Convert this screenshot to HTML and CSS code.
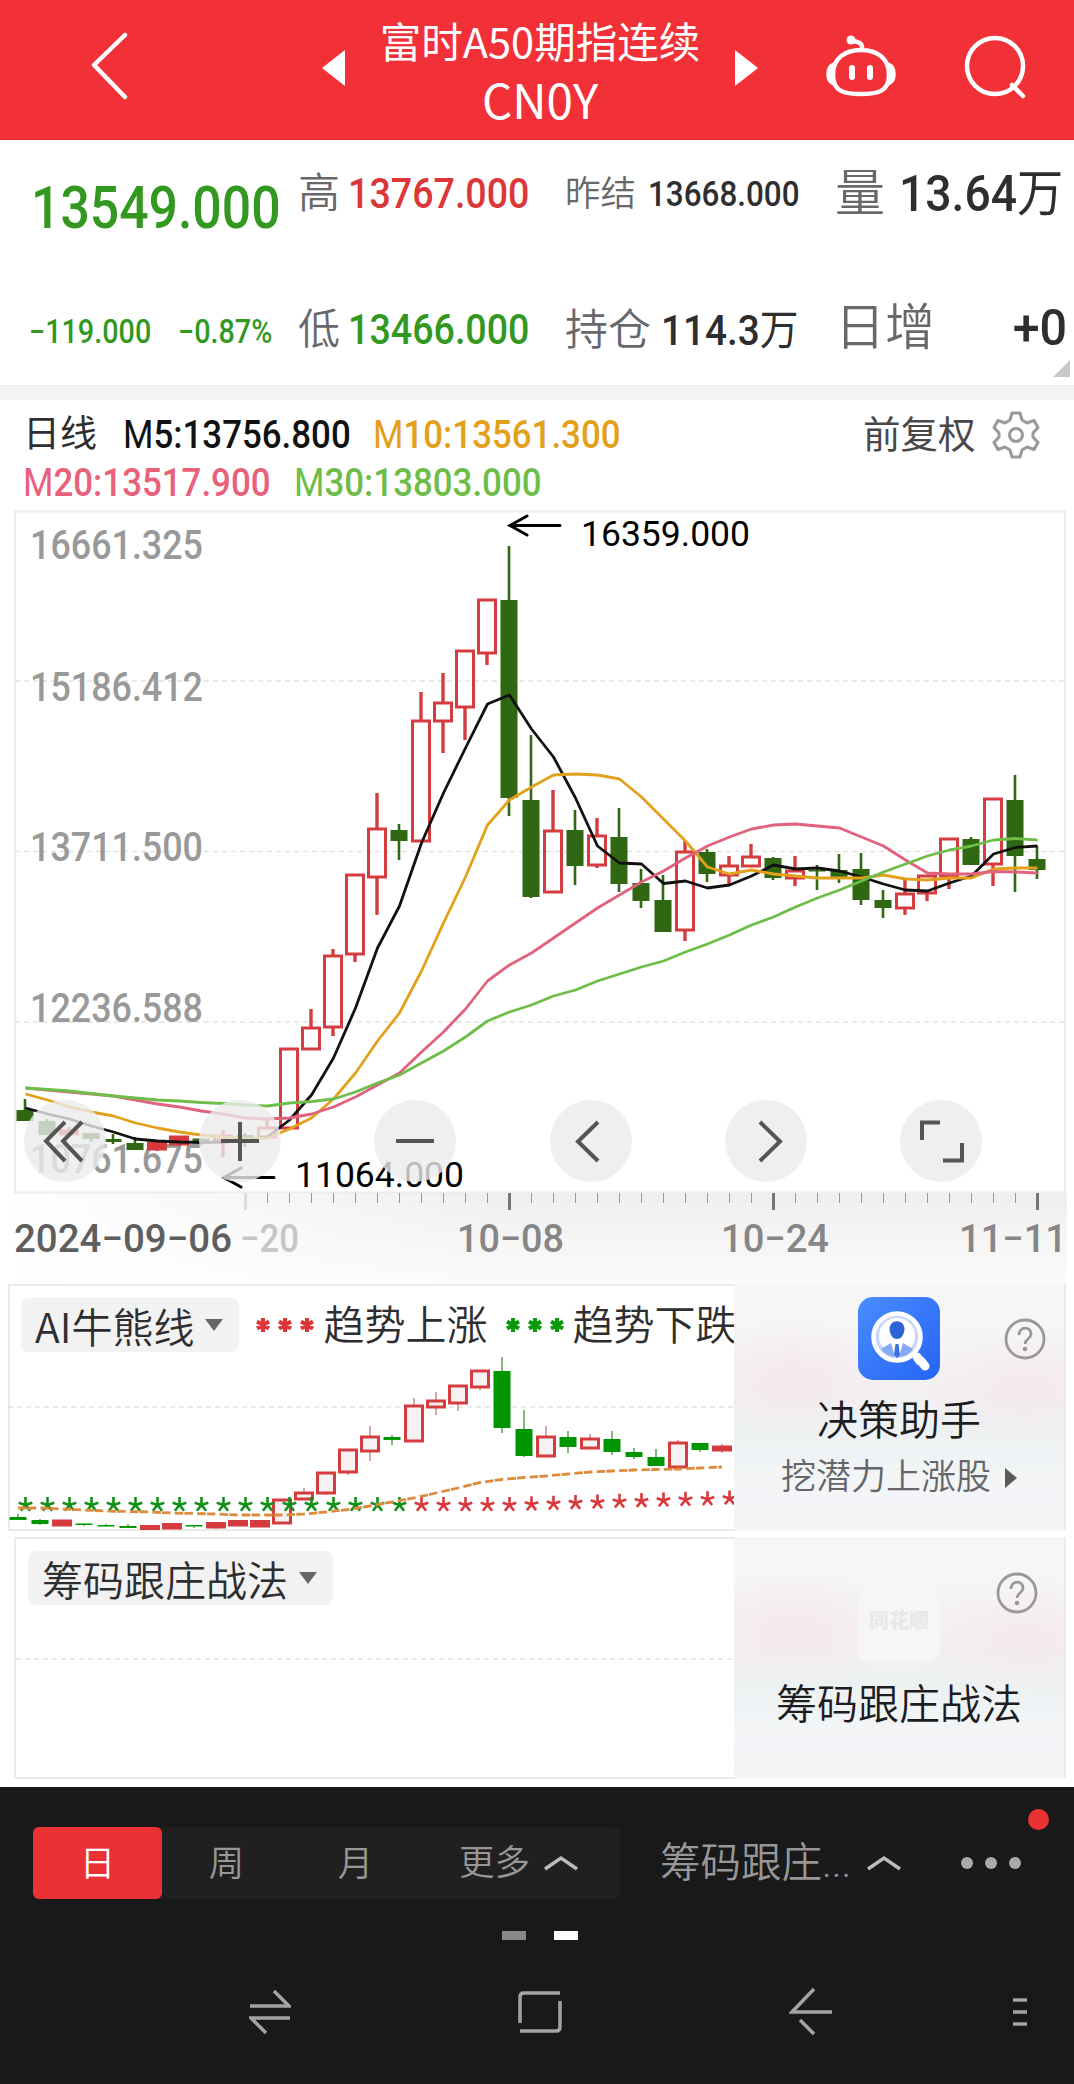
FILE: index.html
```html
<!DOCTYPE html>
<html lang="zh-CN">
<head>
<meta charset="utf-8">
<title>富时A50期指连续 CN0Y</title>
<link rel="stylesheet" href="styles.css">
</head>
<body>
<header class="topbar">
  <svg class="back" width="44" height="70" viewBox="0 0 44 70"><path d="M37 4 6 34 37 66"/></svg>
  <svg class="prev" width="24" height="36" viewBox="0 0 24 36"><path d="M23 0V36L0 18Z"/></svg>
  <h1 class="title"><span>富时A50期指连续</span><span class="code">CN0Y</span></h1>
  <svg class="next" width="24" height="36" viewBox="0 0 24 36"><path d="M1 0V36L24 18Z"/></svg>
  <svg class="robot" width="72" height="64" viewBox="0 0 72 64"><path d="M36 16C52 16 64 24 64 41S52 60 36 60 8 58 8 41 20 16 36 16ZM8 31C2 34 2 46 8 49M64 31C70 34 70 46 64 49M37 16C38 9 34 8 28 7"/><circle class="solid" cx="26" cy="6" r="4.5"/><path class="eyes" d="M27 34V43M45 34V43"/></svg>
  <svg class="search" width="66" height="66" viewBox="0 0 66 66"><circle cx="32" cy="31" r="28"/><path d="M49 50 60 61"/></svg>
</header>

<section class="quote">
  <div class="cell c1"><b class="num price down">13549.000</b></div>
  <div class="cell c2"><span class="lab s42">高</span><b class="num n42 up">13767.000</b></div>
  <div class="cell c3"><span class="lab s36">昨结</span><b class="num n35">13668.000</b></div>
  <div class="cell c4"><span class="lab s50">量</span><b class="num n50 unit">13.64<i>万</i></b></div>
  <div class="cell c1 change"><b class="num n32 down">−119.000</b><b class="num n32 down">−0.87%</b></div>
  <div class="cell c2"><span class="lab s42">低</span><b class="num n42 down">13466.000</b></div>
  <div class="cell c3 hold"><span class="lab s43">持仓</span><b class="num n42 unit">114.3<i>万</i></b></div>
  <div class="cell c4 inc"><span class="lab s50">日增</span><b class="num n50">+0</b></div>
  <svg class="corner" width="17" height="17" viewBox="0 0 17 17"><path d="M17 0V17H0Z"/></svg>
</section>

<section class="legend">
  <div class="line"><span class="period">日线</span><b class="num ma m5"><i>M</i>5:13756.800</b><b class="num ma m10"><i>M</i>10:13561.300</b><span class="adjust">前复权</span>
    <svg class="gear" width="48" height="48" viewBox="0 0 48 48"><path d="M20 2H28L30 9 35 12 42 9.500 46 16.500 41 22V26L46 31.500 42 38.500 35 36 30 39 28 46H20L18 39 13 36 6 38.500 2 31.500 7 26V22L2 16.500 6 9.500 13 12 18 9Z"/><circle cx="24" cy="24" r="6.500"/></svg></div>
  <div class="line second"><b class="num ma m20"><i>M</i>20:13517.900</b><b class="num ma m30"><i>M</i>30:13803.000</b></div>
</section>

<main class="kline">
  <svg id="kline" class="plot" width="1074" height="776" viewBox="0 508 1074 776">
    <defs>
      <linearGradient id="axisShade" x1="0" y1="0" x2="0" y2="1"><stop offset="0" stop-color="#efefef"/><stop offset="1" stop-color="#fbfbfb"/></linearGradient>
      <linearGradient id="axisFade" x1="0" y1="0" x2="1" y2="0"><stop offset="0" stop-color="#fff"/><stop offset="1" stop-color="#fff" stop-opacity="0"/></linearGradient>
    </defs>
    <rect x="0" y="1193" width="1067" height="91" fill="url(#axisShade)"/>
    <rect x="0" y="1193" width="500" height="91" fill="url(#axisFade)"/>
    <rect class="frame" x="15" y="511.500" width="1050" height="681"/>
    <path class="grid" d="M15 681H1065M15 851.500H1065M15 1022H1065"/>
    <g class="scale">
      <text x="30" y="559" textLength="173" lengthAdjust="spacingAndGlyphs">16661.325</text>
      <text x="30" y="701" textLength="173" lengthAdjust="spacingAndGlyphs">15186.412</text>
      <text x="30" y="861" textLength="173" lengthAdjust="spacingAndGlyphs">13711.500</text>
      <text x="30" y="1022" textLength="173" lengthAdjust="spacingAndGlyphs">12236.588</text>
      <text x="30" y="1173" textLength="173" lengthAdjust="spacingAndGlyphs">10761.675</text>
    </g>
    <g id="candles"></g>
    <g id="averages"></g>
    <path class="arrow" d="M560 525.500H510M527 516 510 525.500 527 535M274 1177.500H224M241 1168 224 1177.500 241 1187"/>
    <text class="mark" x="581" y="546" textLength="169">16359.000</text>
    <text class="mark" x="295" y="1187" textLength="169">11064.000</text>
    <g id="ticks"></g>
    <g class="dates">
      <text class="first" x="14" y="1252" textLength="218" lengthAdjust="spacingAndGlyphs">2024−09−06</text>
      <text class="faded" x="240" y="1252" textLength="59" lengthAdjust="spacingAndGlyphs">−20</text>
      <text x="457" y="1252" textLength="107" lengthAdjust="spacingAndGlyphs">10−08</text>
      <text x="721" y="1252" textLength="108" lengthAdjust="spacingAndGlyphs">10−24</text>
      <text x="959" y="1252" textLength="108" lengthAdjust="spacingAndGlyphs">11−11</text>
    </g>
  </svg>
  <nav class="controls">
    <button><svg viewBox="0 0 82 82"><path d="M41 22 22 41 41 61M58 22 39 41 58 61"/></svg></button>
    <button><svg viewBox="0 0 82 82"><path d="M22 41H60M41 22V61"/></svg></button>
    <button><svg viewBox="0 0 82 82"><path d="M22 41H60"/></svg></button>
    <button><svg viewBox="0 0 82 82"><path d="M48 22 28 41.500 48 61"/></svg></button>
    <button><svg viewBox="0 0 82 82"><path d="M35 22 55 41.500 35 61"/></svg></button>
    <button><svg viewBox="0 0 82 82"><path d="M40 22.500H22V40M62 43V60.500H43"/></svg></button>
  </nav>
</main>

<section class="panel bull">
  <div class="study">
    <div class="head">
      <span class="pill">AI牛熊线<i class="caret"></i></span>
      <svg class="stars up" width="60" height="20" viewBox="0 0 60 20"><path d="M8 3V17M2 6.500 14 13.500M2 13.500 14 6.500M30 3V17M24 6.500 36 13.500M24 13.500 36 6.500M52 3V17M46 6.500 58 13.500M46 13.500 58 6.500"/></svg>
      <span class="tag">趋势上涨</span>
      <svg class="stars fall" width="60" height="20" viewBox="0 0 60 20"><path d="M8 3V17M2 6.500 14 13.500M2 13.500 14 6.500M30 3V17M24 6.500 36 13.500M24 13.500 36 6.500M52 3V17M46 6.500 58 13.500M46 13.500 58 6.500"/></svg>
      <span class="tag">趋势下跌</span>
    </div>
    <svg id="trend" class="trend" width="726" height="177" viewBox="8 1353 726 177"><path class="grid" d="M8 1407H734"/></svg>
  </div>
  <aside class="promo">
    <svg class="help" width="44" height="44" viewBox="0 0 44 44"><circle cx="22" cy="22" r="19"/><path d="M16 18C16 9 28 9 28 17 28 22 22 22 22 27"/><circle class="dot" cx="22" cy="32" r="2.300"/></svg>
    <svg class="app" width="82" height="83" viewBox="0 0 82 83">
      <defs><linearGradient id="blue" x1="0" y1="0" x2="1" y2="1"><stop offset="0" stop-color="#4a8cff"/><stop offset="1" stop-color="#2464f6"/></linearGradient></defs>
      <rect width="82" height="83" rx="15" fill="url(#blue)"/>
      <circle cx="39" cy="40" r="23.500" fill="#c9d8f7" stroke="#fff" stroke-width="4.500"/>
      <circle cx="39" cy="39" r="18" fill="#fff"/>
      <path d="M32 35a7.500 8 0 1 1 14 0c-1 4-3 7-7 7s-6-3-7-7Z" fill="#2f62d8"/>
      <path d="M23 52 33 46 37 60Q28 59 23 52ZM55 52 45 46 41 60Q50 59 55 52Z" fill="#86aaf5"/>
      <path d="M37.500 47H40.500L42 58 39 61 36 58Z" fill="#3a6fe6"/>
      <path d="M59 60 62 64M63 64 67 69" stroke="#fff" stroke-width="9" stroke-linecap="round"/>
    </svg>
    <strong>决策助手</strong>
    <span class="sub">挖潜力上涨股<i class="play"></i></span>
  </aside>
</section>

<section class="panel chips">
  <div class="study">
    <div class="head"><span class="pill">筹码跟庄战法<i class="caret"></i></span></div>
    <svg class="empty" width="719" height="4" viewBox="0 0 719 4"><path class="grid" d="M0 2H719"/></svg>
  </div>
  <aside class="promo">
    <svg class="help" width="44" height="44" viewBox="0 0 44 44"><circle cx="22" cy="22" r="19"/><path d="M16 18C16 9 28 9 28 17 28 22 22 22 22 27"/><circle class="dot" cx="22" cy="32" r="2.300"/></svg>
    <span class="ghost">同花顺</span>
    <strong>筹码跟庄战法</strong>
  </aside>
</section>

<footer class="bottom">
  <div class="bar">
    <div class="tabs"><span class="tab on">日</span><span class="tab">周</span><span class="tab">月</span><span class="tab more">更多<svg width="36" height="16" viewBox="0 0 36 16"><path d="M2 14 18 3 34 14"/></svg></span></div>
    <span class="strategy">筹码跟庄...<svg width="36" height="16" viewBox="0 0 36 16"><path d="M2 14 18 3 34 14"/></svg></span>
    <svg class="dots" width="62" height="14" viewBox="0 0 62 14"><circle cx="7" cy="7" r="6"/><circle cx="31" cy="7" r="6"/><circle cx="55" cy="7" r="6"/></svg>
    <i class="badge"></i>
  </div>
  <div class="pager"><i></i><i class="on"></i></div>
  <div class="system">
    <svg width="42" height="46" viewBox="0 0 42 46"><path d="M1 17H40L25 2M41 29H2L17 44"/></svg>
    <svg width="44" height="46" viewBox="0 0 44 46"><path d="M42 4H6Q2 4 2 8V34M2 42H38Q42 42 42 38V12"/></svg>
    <svg width="44" height="48" viewBox="0 0 44 48"><path d="M25 1 3 24H43M11 32 25 46"/></svg>
    <svg width="16" height="30" viewBox="0 0 16 30"><path d="M1 3H15M1 15H15M1 27H15"/></svg>
  </div>
</footer>
<script src="chart.js"></script>
</body>
</html>
```
FILE: styles.css
```css
* { box-sizing: border-box; }
body {
  margin: 0;
  width: 1074px;
  background: #fff;
  color: #2e2e30;
  font-family: Roboto, "Noto Sans CJK SC", sans-serif;
  overflow-x: hidden;
}
svg { display: block; flex: none; fill: none; }
i { font-style: normal; }

/* Top bar */
.topbar { display: flex; align-items: center; height: 140px; background: #f13037; border-bottom: 1px solid #d9282f; }
.topbar svg { stroke: #fff; stroke-width: 4.5; stroke-linecap: round; stroke-linejoin: round; }
.topbar .prev, .topbar .next { fill: #fff; stroke: none; }
.back { margin: -8px 0 0 88px; }
.topbar .prev, .topbar .next { margin-top: -3px; }
.prev { margin-left: 190px; }
.title {
  display: flex; flex-direction: column; align-items: center;
  width: 388px; margin: 0; padding-top: 1px;
  color: #fff; font: 400 41.500px/58px "Noto Sans CJK SC", sans-serif;
}
.title span { white-space: nowrap; }
.title .code { font-size: 47.500px; line-height: 60px; }
.robot { margin: -8px 0 0 67px; }
.robot .solid { fill: #fff; stroke: none; }
.robot .eyes { stroke-width: 6; }
.search { margin: -4px 0 0 66px; }

/* Quote figures */
.quote {
  position: relative;
  display: grid; grid-template-columns: 298px 267px 270px 1fr; grid-template-rows: 136px 109px;
  height: 246px; border-bottom: 1px solid #eee;
}
.cell { display: flex; align-items: baseline; white-space: nowrap; line-height: 60px; padding-top: 24px; }
.num { font-weight: 500; transform-origin: 0 50%; transform: scaleX(.9); }
.up { color: #dc3638; }
.down { color: #32981f; }
.lab { color: #68686a; font-weight: 350; }
.s36 { font-size: 35.500px; } .s42 { font-size: 42px; } .s43 { font-size: 43px; } .s50 { font-size: 50px; }
.n32 { font-size: 32.500px; } .n35 { font-size: 35.500px; } .n42 { font-size: 42.500px; } .n50 { font-size: 50px; }
.num.n32, .num.n35, .num.n42 { transform: scaleX(.885); }
.price { margin: 14px 0 0 31px; font-size: 60px; transform: scaleX(.862); }
.c2 .lab { width: 50px; }
.c3 .lab { width: 83px; }
.hold .lab { width: 96px; }
.c4 .lab { width: 64px; }
.unit i { font-weight: 400; }
.num.n50.unit { transform: scaleX(.925); }
.num.n42.unit { transform: scaleX(.91); }
.change { padding-top: 26px; }
.change .num { margin-left: 29px; width: 120px; }
.cell.inc { justify-content: space-between; padding: 22px 9px 0 0; }
.inc .num { transform-origin: 100% 50%; transform: scaleX(.97); }
.cell.inc .lab { width: auto; }
.corner { position: absolute; right: 4px; top: 220px; fill: #c8c8c8; }

/* Moving average legend */
.legend { border-top: 14px solid #f4f4f4; height: 122px; padding: 11px 0 0 23px; }
.line { display: flex; align-items: center; height: 48px; line-height: 48px; white-space: nowrap; }
.period { width: 100px; font-size: 37px; }
.ma { font-size: 39.500px; transform: scaleX(.883); width: 250px; }
.ma i { font-weight: 400; }
.m5 { color: #111; }
.m10 { color: #e2a01b; width: 490px; }
.m20 { color: #e9607b; width: 271px; }
.m30 { color: #6ebd49; }
.adjust { width: 129px; font-size: 37.500px; color: #48484a; }
.gear { stroke: #999; stroke-width: 3; stroke-linejoin: round; }

/* Main chart */
.kline { position: relative; height: 776px; }
.frame { stroke: #ededed; stroke-width: 2; }
.grid { stroke: #e2e2e2; stroke-width: 1.5; stroke-dasharray: 5 4; }
.scale text { font-size: 41px; font-weight: 500; fill: #999; }
.mark { font-size: 35.500px; fill: #000; }
.arrow { stroke: #000; stroke-width: 3; stroke-linecap: round; }
.dates text { font-size: 39px; font-weight: 500; fill: #868686; }
.dates .first { fill: #5e5e5e; }
.dates .faded { fill: #c6c6c6; }
.candle-up { stroke: #d43c40; }
.candle-down { stroke: #2f6713; fill: #2f6713; }
.average { stroke-width: 2.8; stroke-linejoin: round; }
.tick { stroke: #999; stroke-width: 1; }
.tick-major { stroke: #777; stroke-width: 3; }
.tick-faded { stroke: #ddd; stroke-width: 3; }
.controls { position: absolute; left: 24px; top: 592px; display: flex; gap: 93.200px; }
.controls button { width: 82px; height: 82px; padding: 0; border: 0; border-radius: 50%; background: rgba(235, 235, 235, .8); }
.controls svg { stroke: #555; stroke-width: 4; }

/* Study panels */
.panel { display: flex; width: 1058px; margin-left: 8px; }
.study { flex: 1; min-width: 0; border: 2px solid #ebebeb; border-right: 0; }
.bull { height: 247px; }
.chips { height: 242px; width: 1052px; margin: 6px 0 8px 14px; }
.head { display: flex; align-items: center; padding: 11px 0 0 11px; height: 67px; white-space: nowrap; }
.pill {
  display: flex; align-items: center; height: 54px; padding: 0 16px 0 14px; gap: 11px;
  border-radius: 8px; background: #f2f2f2;
  font: 350 41px/52px "Noto Sans CJK SC", sans-serif;
}
.caret { border: 9px solid transparent; border-top: 12px solid #666; border-bottom: 0; }
.stars { margin: 0 8px 0 16px; stroke-width: 4; stroke: #09990b; }
.stars.up { stroke: #dd3438; }
.tag { font-size: 41px; line-height: 54px; font-weight: 350; padding-top: 1px; }
.tag + .stars { margin-left: 18px; margin-right: 7px; }
.trend { margin: 0 0 0 -2px; }
.candle2-up { fill: #f7f2f2; stroke: #d43c40; stroke-width: 3; }
.candle2-down { fill: #009600; }
.wick2-up { stroke: #c98a8c; stroke-width: 1.5; }
.wick2-down { stroke: #55a555; stroke-width: 1.5; }
.star-down { stroke: #109018; stroke-width: 2.6; }
.star-up { stroke: #d9383c; stroke-width: 2.6; }
.bias { stroke: #dd8b3c; stroke-width: 2.8; stroke-dasharray: 8.500 1.200 8.500 4.200; }
.chips .head { padding-top: 11px; padding-left: 12px; }
.empty { margin-top: 51px; }

.promo {
  position: relative; flex: 0 0 332px;
  display: flex; flex-direction: column; align-items: center;
  border-right: 2px solid #ebebeb;
  background:
    radial-gradient(ellipse 100px 60px at 18% 38%, rgba(246, 226, 231, .6), transparent),
    radial-gradient(ellipse 110px 60px at 88% 42%, rgba(246, 226, 230, .5), transparent),
    linear-gradient(#f6f6f7 0 15%, #f3f0f2 43%, #edf1f2 60%, #f3f5f7 80%, #f5f4f7);
}
.help { position: absolute; right: 17px; top: 33px; stroke: #999; stroke-width: 2.8; }
.help .dot { fill: #999; stroke: none; }
.app { margin: 13px 0 0; }
.promo strong { margin-top: 14px; font-size: 41px; line-height: 54px; font-weight: 350; color: #1d1d1f; }
.sub { display: flex; align-items: center; gap: 14px; margin-top: 3px; font-size: 35px; line-height: 54px; font-weight: 350; color: #66666a; }
.play { border: 10px solid transparent; border-left: 12px solid #5a5a5c; border-right: 0; }
.chips .help { right: 25px; top: 34px; }
.ghost { width: 82px; height: 83px; margin-top: 43px; border-radius: 14px; background: #f6f6f6; color: #e8e8e8; text-align: center; font-size: 20px; line-height: 82px; font-weight: 900; }
.chips strong { margin-top: 15px; }

/* Dark toolbar and system navigation */
.bottom { height: 297px; background: #191919; color: #979797; }
.bar { position: relative; display: flex; align-items: center; padding: 40px 0 0 33px; height: 112px; }
.bar svg { stroke: #bbb; stroke-width: 3.500; }
.tabs { display: flex; width: 587px; height: 72px; border-radius: 6px; background: #202020; }
.tab { width: 129px; text-align: center; font-size: 35.500px; line-height: 74px; font-weight: 350; }
.tab.on { border-radius: 6px; background: #ea3134; color: #fff; }
.tab.more { display: flex; align-items: center; gap: 13px; width: 200px; padding-left: 39px; }
.strategy { display: flex; align-items: center; gap: 15px; width: 300px; margin-left: 40px; font-size: 40.500px; font-weight: 350; line-height: 74px; }
.strategy svg { margin-left: 0; }
.bar .dots { fill: #aaa; stroke: none; }
.badge { position: absolute; left: 1028px; top: 22px; width: 21px; height: 21px; border-radius: 50%; background: #ea3134; }
.pager { display: flex; justify-content: center; gap: 28px; padding: 32px 0 0 6px; }
.pager i { width: 24px; height: 9px; background: #888; }
.pager .on { background: #fff; }
.system { display: flex; align-items: center; padding: 46px 0 0 249px; height: 98px; }
.system svg { stroke: #a3a3a3; stroke-width: 3.500; margin-right: 227px; }
.system svg:nth-child(3) { margin-right: 179px; }
.system svg:nth-child(4) { margin-right: 0; }
```
FILE: chart.js
```js
const NS = "http://www.w3.org/2000/svg";
function add(parent, name, attrs) {
  const el = document.createElementNS(NS, name);
  for (const key in attrs) el.setAttribute(key, attrs[key]);
  parent.appendChild(el);
}
const byId = (id) => document.getElementById(id);

// Sessions: [direction, high, body top, body bottom, low]
const sessions = [
  ["g",1099,1110,1121,1121],["g",1119,1121,1135,1135],["r",1127,1131,1134,1137],["g",1133,1133,1139,1142],
  ["g",1134,1139,1142,1144],["g",1137,1143,1150,1150],["s",1142,1143,1149,1151],["s",1136,1137,1144,1146],
  ["g",1138,1138.5,1141.5,1145],["r",1130,1136,1140,1157],["g",1133,1135,1140,1147],["r",1118,1128,1137,1137],
  ["r",1049,1049,1128,1128],["r",1009,1028,1049,1049],["r",949,956,1027,1036],["r",875,875,954,962],
  ["r",793,829,877,915],["g",824,830,841,860],["r",692,721,841,841],["r",673,703,721,753],
  ["r",651,651,707,740],["r",600,600,653,665],["g",546,600,798,816],["g",735,800,897,898],
  ["r",790,831,892,892],["g",810,830,866,885],["r",818,836,865,868],["g",808,837,884,892],
  ["g",869,883,901,908],["g",875,900,932,932],["r",841,852,930,941],["g",849,852,874,882],
  ["r",856,866,875,884],["r",844,857,866,866],["g",857,858,878,880],["r",856,871,878,886],
  ["g",865,870,871.5,890],["g",854,870,878,883],["g",853,869,900,905],["g",890,900,908,918],
  ["r",879,894,908,915],["r",876,876,893,901],["r",839,839,876,889],["g",837,839,865,865],
  ["r",799,799,864,886],["g",775,800,856,892],["g",846,859,870,879]
];
const candles = byId("candles");
sessions.forEach(([dir, hi, top, bottom, lo], i) => {
  const x = 25 + 22 * i;
  if (dir === "g") {
    add(candles, "path", { class: "candle-down", d: `M${x} ${hi}V${lo}`, "stroke-width": 2.6 });
    add(candles, "rect", { fill: "#2f6713", x: x - 8.5, y: top, width: 17, height: bottom - top });
  } else {
    add(candles, "path", { class: "candle-up", d: `M${x} ${hi}V${top}M${x} ${bottom}V${lo}`, "stroke-width": 3.4 });
    add(candles, "rect", { class: "candle-up", x: x - 8.5, y: top, width: 17, height: bottom - top, "stroke-width": 3, fill: dir === "s" ? "#dd3438" : "none" });
  }
});

const averages = {
  "#111": [1108,1114,1119,1126,1132,1139,1141,1142,1142.5,1142,1140,1137,1120,1095,1058,1008,948,906,843,793,748,704,695,729,757,798,846,863,864,883.5,881,888,885,876,865,869,868,871,877,884,890,891,883,876,854,847.5,846],
  "#e2a01b": [1094,1100,1107,1112,1116,1123,1128,1132,1135,1137,1139,1138,1129,1118,1099,1073,1041,1013,971,923,877,825,800,787,775,774,775,779,797,819,841,867,874,870,874,876,878,878,878,875,879,880,878,878,869,868,868],
  "#e0627c": [1088,1090,1092,1094,1096,1100,1104,1107,1111,1114,1118,1119,1118,1114,1107,1097,1085,1073,1052,1032,1009,981,965,953,938,923,908,895,882,871,858,846,837,829,825,824,826,828,837,846,860,873,874,874,871.5,872,873],
  "#6ebd49": [1088,1089.5,1091,1093.5,1096,1098,1100,1101,1102.5,1103.5,1105,1106,1103,1101.5,1099,1092,1083,1075,1063,1051,1037,1021,1012,1005,996,990,981,974,967,961,952,944,935,925,917,907,898,890,881,872,864,856,850,846,840,838.5,840]
};
for (const color in averages) {
  add(byId("averages"), "polyline", { class: "average", stroke: color, points: averages[color].map((y, i) => `${25.5 + 22 * i},${y}`).join(" ") });
}

// Date axis ticks, with a heavier one on every labelled session
for (let i = 10; i < 47; i++) {
  const x = 25.5 + 22 * i;
  const major = i === 22 || i === 34 || i === 46;
  add(byId("ticks"), "path", { class: i === 10 ? "tick-faded" : major ? "tick-major" : "tick", d: `M${x} 1193V${major || i === 10 ? 1210 : 1203}` });
}

// Trend study: the same sessions on a compressed scale
const study = [
  ["g",1514,1517,1520,1520],["g",1519,1520,1524,1525],["s",1520,1521,1525,1525],["g",1523,1523.5,1525,1526],
  ["g",1524,1525,1526.5,1527],["g",1524,1526,1528,1528],["s",1526,1526.5,1529,1529],["s",1523,1524.5,1528,1528],
  ["g",1525,1525,1526.5,1528],["s",1523,1523.5,1527,1529],["s",1520,1521.5,1525,1526],["s",1520,1521.5,1526,1526],
  ["r",1499,1500,1523,1523],["r",1488,1493,1499,1499],["r",1472,1473,1493,1495],["r",1449,1450,1472,1475],
  ["r",1426,1437,1451,1461],["g",1435,1437,1440,1445],["r",1398,1406,1441,1441],["r",1392,1401,1407,1415],
  ["r",1385,1386,1403,1411],["r",1370,1371,1387,1390],["g",1357,1371,1428,1433],["g",1410,1429,1456,1457],
  ["r",1426,1437,1456,1456],["g",1431,1437,1447,1453],["r",1434,1439,1448,1448],["g",1431,1439,1452,1455],
  ["g",1448,1452,1457,1459],["g",1449,1457,1466,1466],["r",1440,1443,1467,1467],["g",1443,1443,1450,1452],
  ["s",1444,1447,1450,1453]
];
const trend = byId("trend");
study.forEach(([dir, hi, top, bottom, lo], i) => {
  const x = 18 + 22 * i;
  add(trend, "path", { class: dir === "g" ? "wick2-down" : "wick2-up", d: `M${x} ${hi}V${top}M${x} ${bottom}V${lo}` });
  if (dir === "g") add(trend, "rect", { class: "candle2-down", x: x - 8.5, y: top, width: 17, height: bottom - top });
  else add(trend, "rect", { class: "candle2-up", x: x - 8.5, y: top, width: 17, height: bottom - top, style: dir === "s" ? "fill:#dd3438" : "" });
});
for (let i = 0; i < 33; i++) {
  const x = 25.5 + 22 * i;
  const y = i < 23 ? 1505 : 1505 - (i - 22) * 0.65;
  add(trend, "path", { class: i < 18 ? "star-down" : "star-up", d: `M${x} ${y}V${y - 8}M${x} ${y}l6.800 -2.200M${x} ${y}l-6.800 -2.200M${x} ${y}l4.600 5.800M${x} ${y}l-4.600 5.800` });
}
const bias = [1508,1508,1509,1510,1511,1511.5,1512,1513,1513.5,1514,1515,1515,1515,1514,1512,1509.5,1506,1502,1498,1493,1488,1482.5,1479.5,1477.5,1476,1474,1472,1471,1470,1469.5,1469,1468,1467];
add(trend, "polyline", { class: "bias", points: bias.map((y, i) => `${18 + 22 * i},${y}`).join(" ") });
```
